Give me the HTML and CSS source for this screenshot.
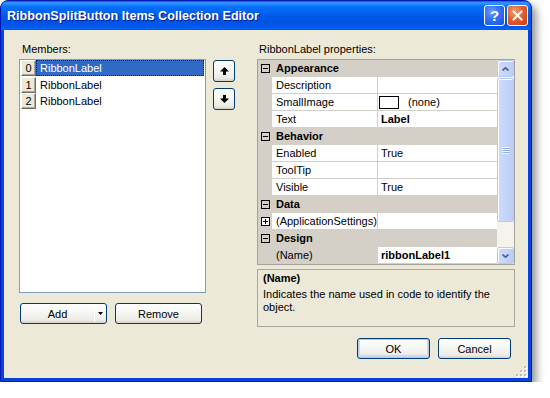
FILE: index.html
```html
<!DOCTYPE html>
<html lang="en">
<head>
    <meta charset="UTF-8">
    <title>RibbonSplitButton Items Collection Editor</title>
    <link rel="stylesheet" href="styles.css">
</head>
<body>
    <div class="window">
        <div class="titlebar">
            <span class="title">RibbonSplitButton Items Collection Editor</span>
            <div class="caption-buttons">
                <button class="cap-btn help">?</button>
                <button class="cap-btn close">
                    <svg width="11" height="11" viewBox="0 0 11 11"><path d="M1.5 1.5 L9.5 9.5 M9.5 1.5 L1.5 9.5" stroke="#fff" stroke-width="2" stroke-linecap="square"/></svg>
                </button>
            </div>
        </div>

        <div class="client">
            <div class="main">
                <div class="members">
                    <label class="caption">Members:</label>
                    <div class="listbox">
                        <div class="list-item selected"><span class="index">0</span><span class="item-text">RibbonLabel</span></div>
                        <div class="list-item"><span class="index">1</span><span class="item-text">RibbonLabel</span></div>
                        <div class="list-item"><span class="index">2</span><span class="item-text">RibbonLabel</span></div>
                    </div>
                    <div class="list-actions">
                        <button class="btn split">
                            <span class="split-label">Add</span>
                            <span class="split-arrow"><svg width="5" height="3" viewBox="0 0 5 3"><path d="M0 0 H5 L2.5 3 Z" fill="#000"/></svg></span>
                        </button>
                        <button class="btn">Remove</button>
                    </div>
                </div>

                <div class="order-buttons">
                    <button class="btn square">
                        <svg width="9" height="8" viewBox="0 0 9 8"><path d="M4.5 0 L9 4.5 H6 V8 H3 V4.5 H0 Z" fill="#000"/></svg>
                    </button>
                    <button class="btn square">
                        <svg width="9" height="8" viewBox="0 0 9 8"><path d="M4.5 8 L9 3.5 H6 V0 H3 V3.5 H0 Z" fill="#000"/></svg>
                    </button>
                </div>

                <div class="properties">
                    <label class="caption">RibbonLabel properties:</label>
                    <div class="grid">
                        <div class="grid-rows">
                            <div class="row category">
                                <span class="gutter"><svg class="toggle" width="9" height="9" viewBox="0 0 9 9"><rect x="0.5" y="0.5" width="8" height="8" fill="none" stroke="#000"/><path d="M2 4.5 H7" stroke="#000"/></svg></span>
                                <span class="cat-label">Appearance</span>
                            </div>
                            <div class="row item"><span class="gutter"></span><span class="name">Description</span><span class="value"></span></div>
                            <div class="row item"><span class="gutter"></span><span class="name">SmallImage</span><span class="value"><span class="swatch"></span>(none)</span></div>
                            <div class="row item"><span class="gutter"></span><span class="name">Text</span><span class="value strong">Label</span></div>
                            <div class="row category">
                                <span class="gutter"><svg class="toggle" width="9" height="9" viewBox="0 0 9 9"><rect x="0.5" y="0.5" width="8" height="8" fill="none" stroke="#000"/><path d="M2 4.5 H7" stroke="#000"/></svg></span>
                                <span class="cat-label">Behavior</span>
                            </div>
                            <div class="row item"><span class="gutter"></span><span class="name">Enabled</span><span class="value">True</span></div>
                            <div class="row item"><span class="gutter"></span><span class="name">ToolTip</span><span class="value"></span></div>
                            <div class="row item"><span class="gutter"></span><span class="name">Visible</span><span class="value">True</span></div>
                            <div class="row category">
                                <span class="gutter"><svg class="toggle" width="9" height="9" viewBox="0 0 9 9"><rect x="0.5" y="0.5" width="8" height="8" fill="none" stroke="#000"/><path d="M2 4.5 H7" stroke="#000"/></svg></span>
                                <span class="cat-label">Data</span>
                            </div>
                            <div class="row item">
                                <span class="gutter"><svg class="toggle" width="9" height="9" viewBox="0 0 9 9"><rect x="0.5" y="0.5" width="8" height="8" fill="#fff" stroke="#000"/><path d="M2 4.5 H7 M4.5 2 V7" stroke="#000"/></svg></span>
                                <span class="name">(ApplicationSettings)</span><span class="value"></span>
                            </div>
                            <div class="row category">
                                <span class="gutter"><svg class="toggle" width="9" height="9" viewBox="0 0 9 9"><rect x="0.5" y="0.5" width="8" height="8" fill="none" stroke="#000"/><path d="M2 4.5 H7" stroke="#000"/></svg></span>
                                <span class="cat-label">Design</span>
                            </div>
                            <div class="row item selected"><span class="gutter"></span><span class="name">(Name)</span><span class="value strong">ribbonLabel1</span></div>
                        </div>
                        <div class="scrollbar">
                            <div class="sb-btn">
                                <svg width="7" height="4" viewBox="0 0 7 4"><path d="M0.5 3.5 L3.5 0.8 L6.5 3.5" fill="none" stroke="#4d6185" stroke-width="1.6"/></svg>
                            </div>
                            <div class="sb-thumb">
                                <svg width="8" height="7" viewBox="0 0 8 7"><path d="M0 0.5 H8 M0 2.5 H8 M0 4.5 H8 M0 6.5 H8" stroke="#eef4fe"/><path d="M1 1.5 H8 M1 3.5 H8 M1 5.5 H8" stroke="#8cb0f3"/></svg>
                            </div>
                            <div class="sb-track"></div>
                            <div class="sb-btn">
                                <svg width="7" height="4" viewBox="0 0 7 4"><path d="M0.5 0.5 L3.5 3.2 L6.5 0.5" fill="none" stroke="#4d6185" stroke-width="1.6"/></svg>
                            </div>
                        </div>
                    </div>
                    <div class="help-panel">
                        <span class="help-title">(Name)</span>
                        <p>Indicates the name used in code to identify the object.</p>
                    </div>
                </div>
            </div>

            <div class="footer">
                <button class="btn default">OK</button>
                <button class="btn">Cancel</button>
            </div>

            <svg class="grip" width="12" height="12" viewBox="0 0 12 12">
                <g fill="#fff">
                    <rect x="9" y="1" width="2" height="2"/>
                    <rect x="5" y="5" width="2" height="2"/><rect x="9" y="5" width="2" height="2"/>
                    <rect x="1" y="9" width="2" height="2"/><rect x="5" y="9" width="2" height="2"/><rect x="9" y="9" width="2" height="2"/>
                </g>
                <g fill="#c2beb1">
                    <rect x="8" y="0" width="2" height="2"/>
                    <rect x="4" y="4" width="2" height="2"/><rect x="8" y="4" width="2" height="2"/>
                    <rect x="0" y="8" width="2" height="2"/><rect x="4" y="8" width="2" height="2"/><rect x="8" y="8" width="2" height="2"/>
                </g>
            </svg>
        </div>
    </div>
</body>
</html>
```

FILE: styles.css
```css
* {
    box-sizing: border-box;
}

body {
    margin: 0;
    background: #ffffff;
    font-family: 'Liberation Sans', Arial, sans-serif;
    font-size: 11px;
    color: #000;
}

/* fenêtre style XP */
.window {
    width: 532px;
    height: 382px;
    display: flex;
    flex-direction: column;
    background: #0842dc;
    border: 1px solid #0019b0;
    border-radius: 8px 8px 0 0;
    box-shadow: 4px 5px 8px rgba(0, 0, 0, 0.45);
    overflow: hidden;
}

.titlebar {
    height: 29px;
    display: flex;
    align-items: center;
    padding: 0 3px 0 6px;
    background: linear-gradient(to bottom, #0058ee 0%, #3a93ff 6%, #288eff 10%, #127dff 15%, #036ffc 22%, #0262ee 40%, #0057e5 56%, #0054e3 72%, #0055eb 86%, #005bf5 93%, #026afe 97%, #0048d8 100%);
}

.title {
    flex: 1;
    color: #fff;
    font-weight: bold;
    font-size: 12.6px;
    padding-top: 1px;
    text-shadow: 1px 1px 0 #0a1b8a;
}

.caption-buttons {
    display: flex;
    gap: 2px;
    align-self: flex-start;
    margin-top: 4px;
}

.cap-btn {
    width: 21px;
    height: 21px;
    padding: 0;
    border: 1px solid #fff;
    border-radius: 3px;
    display: flex;
    align-items: center;
    justify-content: center;
    color: #fff;
    font-family: 'Liberation Sans', Arial, sans-serif;
    font-weight: bold;
    font-size: 15px;
}

.cap-btn.help {
    background: radial-gradient(circle at 35% 30%, #6a9cff 0%, #3371f4 45%, #1b52dc 100%);
}

.cap-btn.close {
    background: radial-gradient(circle at 35% 30%, #f29d7b 0%, #e2612f 45%, #c63b14 100%);
}

.client {
    flex: 1;
    position: relative;
    margin: 0 3px 3px;
    padding: 13px 13px 0 15px;
    background: #ece9d8;
    display: flex;
    flex-direction: column;
}

.main {
    display: flex;
}

.caption {
    display: block;
    line-height: 13px;
    margin-bottom: 3px;
}

/* liste des membres */
.members {
    width: 187px;
    display: flex;
    flex-direction: column;
}

.members .caption {
    padding-left: 3px;
}

.listbox {
    height: 234px;
    border: 1px solid #7f9db9;
    background: #fff;
    padding: 0 1px 0 1px;
}

.list-item {
    display: flex;
    height: 16px;
    margin-bottom: 0.5px;
}

.index {
    width: 15px;
    height: 16px;
    border: 1px solid;
    border-color: #fff #716f64 #716f64 #fff;
    box-shadow: inset -1px -1px 0 #aca899;
    background: #ece9d8;
    text-align: center;
    line-height: 14px;
}

.item-text {
    flex: 1;
    padding-left: 3px;
    line-height: 14px;
    border: 1px solid transparent;
}

.list-item.selected .item-text {
    background: #316ac5;
    color: #fff;
    border: 1px dotted #10254f;
}

.list-actions {
    display: flex;
    gap: 8px;
    margin-top: 10px;
    padding-left: 1px;
}

.btn {
    height: 21px;
    padding: 0;
    font-family: inherit;
    font-size: 11px;
    color: #000;
    border: 1px solid #003c74;
    border-radius: 3px;
    background: linear-gradient(to bottom, #ffffff 0%, #f7f7f4 40%, #ecebe6 85%, #d6d0c5 100%);
}

.list-actions .btn {
    width: 87px;
}

.btn.split {
    display: flex;
    align-items: stretch;
}

.split-label {
    flex: 1;
    line-height: 19px;
    text-align: center;
    border-right: 1px solid #fff;
    margin: 1px 0;
}

.split-arrow {
    width: 11px;
    display: flex;
    align-items: center;
    justify-content: center;
}

.order-buttons {
    display: flex;
    flex-direction: column;
    gap: 6px;
    margin-left: 7px;
    padding-top: 17px;
}

.btn.square {
    width: 22px;
    height: 22px;
    display: flex;
    align-items: center;
    justify-content: center;
}

/* grille de propriétés */
.properties {
    width: 258px;
    margin-left: 22px;
    display: flex;
    flex-direction: column;
}

.properties .caption {
    padding-left: 2px;
}

.grid {
    height: 206px;
    display: flex;
    border: 1px solid #a5a29a;
    background: #fff;
}

.grid-rows {
    width: 239px;
}

.row {
    display: grid;
    grid-template-columns: 14px 106px 119px;
    height: 17px;
}

.gutter {
    background: #d4d0c8;
    display: flex;
    align-items: center;
    padding: 0 0 1px 3px;
}

.category {
    background: #d4d0c8;
    font-weight: bold;
}

.cat-label {
    grid-column: 2 / 4;
    padding-left: 4px;
    line-height: 16px;
}

.name {
    padding-left: 4px;
    line-height: 16px;
    background: #fff;
    border-right: 1px solid #d4d0c8;
    border-bottom: 1px solid #d4d0c8;
    white-space: nowrap;
}

.value {
    display: flex;
    align-items: center;
    padding-left: 3px;
    line-height: 16px;
    background: #fff;
    border-bottom: 1px solid #d4d0c8;
}

.value.strong {
    font-weight: bold;
}

.item.selected .name {
    background: #d4d0c8;
}

.swatch {
    width: 20px;
    height: 13px;
    border: 1px solid #000;
    background: #fff;
    margin: 0 9px 0 -2px;
}

.scrollbar {
    width: 17px;
    display: flex;
    flex-direction: column;
    background: #f4f3ee;
}

.sb-btn,
.sb-thumb {
    display: flex;
    align-items: center;
    justify-content: center;
    border: 1px solid #b7caf5;
    border-radius: 2px;
    box-shadow: inset 1px 1px 0 #fff;
    background: linear-gradient(to right, #cddbfc, #bccdf7);
}

.sb-btn {
    height: 17px;
}

.sb-thumb {
    height: 144px;
    margin-top: 1px;
}

.sb-track {
    flex: 1;
}

.help-panel {
    height: 58px;
    margin-top: 4px;
    padding: 2px 5px;
    border: 1px solid #aca899;
}

.help-title {
    display: block;
    font-weight: bold;
    line-height: 13px;
    margin-bottom: 3px;
}

.help-panel p {
    margin: 0;
    line-height: 13px;
}

.footer {
    display: flex;
    justify-content: flex-end;
    gap: 8px;
    margin-top: 11px;
    padding-right: 4px;
}

.footer .btn {
    width: 73px;
}

.btn.default {
    box-shadow: inset 0 0 0 1px #b5c9f2, inset 0 -1px 0 2px #c9d9f7;
}

.grip {
    position: absolute;
    right: 0;
    bottom: 0;
}
```
